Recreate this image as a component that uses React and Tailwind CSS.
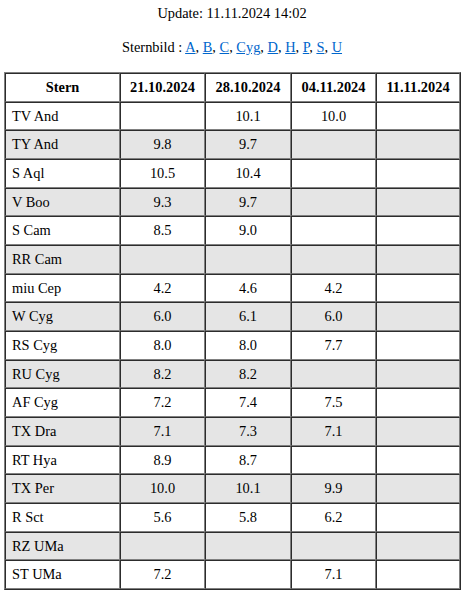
import React from "react";

const rows = [
  ["TV And", "", "10.1", "10.0", ""],
  ["TY And", "9.8", "9.7", "", ""],
  ["S Aql", "10.5", "10.4", "", ""],
  ["V Boo", "9.3", "9.7", "", ""],
  ["S Cam", "8.5", "9.0", "", ""],
  ["RR Cam", "", "", "", ""],
  ["miu Cep", "4.2", "4.6", "4.2", ""],
  ["W Cyg", "6.0", "6.1", "6.0", ""],
  ["RS Cyg", "8.0", "8.0", "7.7", ""],
  ["RU Cyg", "8.2", "8.2", "", ""],
  ["AF Cyg", "7.2", "7.4", "7.5", ""],
  ["TX Dra", "7.1", "7.3", "7.1", ""],
  ["RT Hya", "8.9", "8.7", "", ""],
  ["TX Per", "10.0", "10.1", "9.9", ""],
  ["R Sct", "5.6", "5.8", "6.2", ""],
  ["RZ UMa", "", "", "", ""],
  ["ST UMa", "7.2", "", "7.1", ""],
];

const links = ["A", "B", "C", "Cyg", "D", "H", "P", "S", "U"];

const cell =
  "font-['Liberation_Serif',serif] text-[14.4px] border border-[gray] [border-style:inset] py-[4px] px-[6px] leading-[18.67px]";

export default function App() {
  return (
    <div className="font-['Liberation_Serif',serif] text-[14.4px] text-black bg-white">
      <div className="pt-[4px] text-center leading-[18px]">
        Update: 11.11.2024 14:02
      </div>
      <div className="mt-[16px] text-center leading-[18px]">
        Sternbild :{" "}
        {links.map((l, i) => (
          <React.Fragment key={l}>
            <a href="#" className="text-[#0066cc] underline">
              {l}
            </a>
            {i < links.length - 1 ? ", " : ""}
          </React.Fragment>
        ))}
      </div>
      <table className="mt-[16px] ml-[4px] w-[457px] table-fixed border-separate border-spacing-0 border border-[gray] [border-style:outset] font-['Liberation_Serif',serif]">
        <thead>
          <tr>
            <th className={cell + " w-[115px] text-center font-bold"}>Stern</th>
            <th className={cell + " w-[85px] text-center font-bold"}>21.10.2024</th>
            <th className={cell + " w-[86px] text-center font-bold"}>28.10.2024</th>
            <th className={cell + " w-[85px] text-center font-bold"}>04.11.2024</th>
            <th className={cell + " w-[84px] text-center font-bold"}>11.11.2024</th>
          </tr>
        </thead>
        <tbody>
          {rows.map((r, i) => (
            <tr key={r[0]} className={i % 2 === 1 ? "bg-[#e5e5e5]" : "bg-white"}>
              <td className={cell + " text-left"}>{r[0]}</td>
              {r.slice(1).map((v, j) => (
                <td key={j} className={cell + " text-center"}>
                  {v}
                </td>
              ))}
            </tr>
          ))}
        </tbody>
      </table>
    </div>
  );
}
